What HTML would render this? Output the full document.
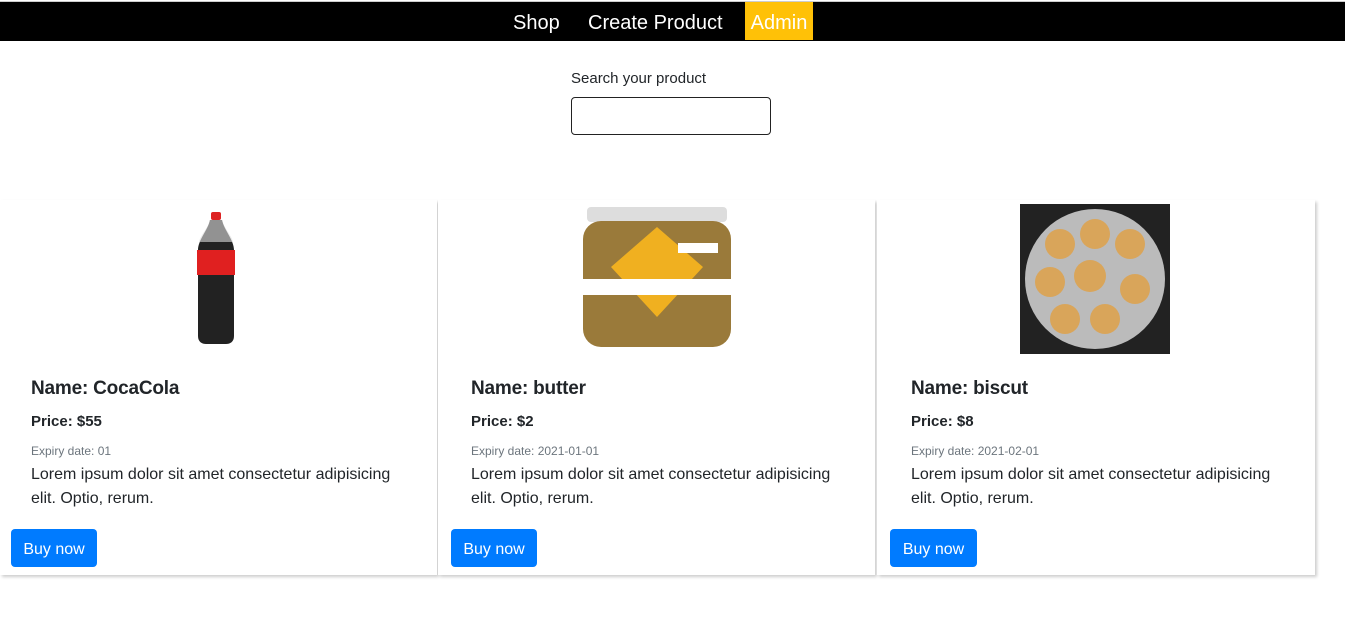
<!DOCTYPE html>
<html><head><style>
*{box-sizing:border-box;margin:0;padding:0}
body{width:1345px;height:619px;background:#fff;font-family:"Liberation Sans",sans-serif;color:#212529;position:relative;overflow:hidden}
.nav{position:absolute;top:1px;left:0;width:1345px;height:40px;background:#000;border-top:1px solid #ccc}
.nav a{position:absolute;top:0;height:38px;line-height:42px;color:#fff;font-size:20px;text-decoration:none}
.lbl{position:absolute;left:571px;top:70px;font-size:15px}
.inp{position:absolute;left:571px;top:97px;width:200px;height:38px;border:1px solid #222;border-radius:4px}
.card{position:absolute;top:200px;height:375px;background:#fff;box-shadow:2px 2px 3px rgba(0,0,0,.2)}
.t{position:absolute;left:31px}
.name{top:378px;font-size:19px;font-weight:bold;letter-spacing:-0.2px}
.price{top:413px;font-size:15px;font-weight:bold}
.exp{top:444px;font-size:12px;color:#6c757d}
.lor{top:463px;font-size:16px;line-height:24px;width:380px}
.btn{position:absolute;top:529px;width:86px;height:38px;background:#007bff;color:#fff;border-radius:4px;font-size:16px;line-height:41px;text-align:center}
</style></head><body>
<div class="nav">
<a style="left:513px">Shop</a>
<a style="left:588px">Create Product</a>
<a style="left:745px;width:68px;background:#ffc107;text-align:center">Admin</a>
</div>
<div class="lbl">Search your product</div>
<div class="inp"></div>

<div class="card" style="left:0;width:437px"></div>
<div class="card" style="left:438px;width:437px"></div>
<div class="card" style="left:877px;width:438px"></div>

<svg style="position:absolute;left:194px;top:210px" width="46" height="138" viewBox="0 0 46 138">
<rect x="17" y="2" width="10" height="8" fill="#d22" rx="2"/>
<path d="M16 10h12c2 10 12 20 12 30v86c0 6-4 8-8 8h-20c-4 0-8-2-8-8V40c0-10 10-20 12-30z" fill="#222"/>
<path d="M16 10h12c2 8 10 16 11 22H5c1-6 9-14 11-22z" fill="#ddd" opacity=".6"/>
<rect x="3" y="40" width="38" height="25" fill="#e02020"/>
</svg>

<svg style="position:absolute;left:583px;top:207px" width="148" height="143" viewBox="0 0 148 143">
<rect x="4" y="0" width="140" height="15" rx="4" fill="#ddd"/>
<rect x="0" y="14" width="148" height="126" rx="18" fill="#9a7a3a"/>
<polygon points="74,20 120,60 74,110 28,60" fill="#f0b020"/>
<rect x="0" y="72" width="148" height="16" fill="#fff"/>
<rect x="95" y="36" width="40" height="10" fill="#fff"/>
</svg>

<svg style="position:absolute;left:1020px;top:204px" width="150" height="150" viewBox="0 0 150 150">
<rect width="150" height="150" fill="#222"/>
<circle cx="75" cy="75" r="70" fill="#bbb"/>
<g fill="#d9a55a">
<circle cx="40" cy="40" r="15"/><circle cx="75" cy="30" r="15"/><circle cx="110" cy="40" r="15"/>
<circle cx="30" cy="78" r="15"/><circle cx="70" cy="72" r="16"/><circle cx="115" cy="85" r="15"/>
<circle cx="45" cy="115" r="15"/><circle cx="85" cy="115" r="15"/>
</g></svg>

<div class="t name">Name: CocaCola</div>
<div class="t price">Price: $55</div>
<div class="t exp">Expiry date: 01</div>
<div class="t lor">Lorem ipsum dolor sit amet consectetur adipisicing elit. Optio, rerum.</div>
<div class="btn" style="left:11px">Buy now</div>

<div class="t name" style="left:471px">Name: butter</div>
<div class="t price" style="left:471px">Price: $2</div>
<div class="t exp" style="left:471px">Expiry date: 2021-01-01</div>
<div class="t lor" style="left:471px">Lorem ipsum dolor sit amet consectetur adipisicing elit. Optio, rerum.</div>
<div class="btn" style="left:451px">Buy now</div>

<div class="t name" style="left:911px">Name: biscut</div>
<div class="t price" style="left:911px">Price: $8</div>
<div class="t exp" style="left:911px">Expiry date: 2021-02-01</div>
<div class="t lor" style="left:911px">Lorem ipsum dolor sit amet consectetur adipisicing elit. Optio, rerum.</div>
<div class="btn" style="left:890px;width:87px">Buy now</div>
</body></html>
